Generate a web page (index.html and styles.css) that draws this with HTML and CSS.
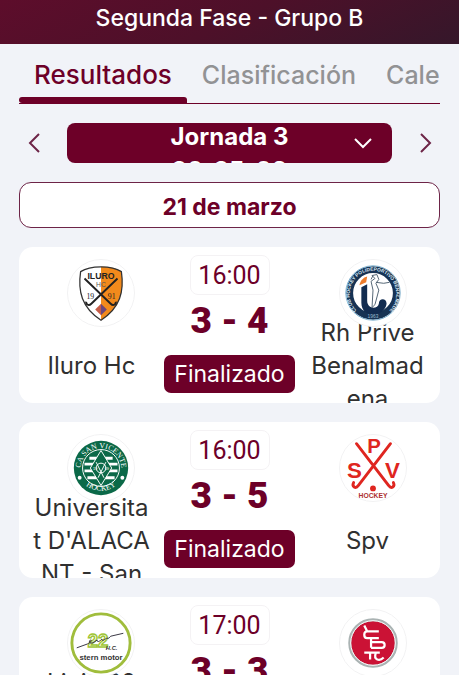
FILE: index.html
```html
<!DOCTYPE html>
<html lang="es">
<head>
    <meta charset="UTF-8">
    <meta name="viewport" content="width=device-width, initial-scale=1.0">
    <title>Resultados</title>
    <link rel="stylesheet" href="styles.css">
</head>
<body>
    <header class="cabecera">
        <h1>Segunda Fase - Grupo B</h1>
    </header>
    <main>
        <nav class="pestanas">
            <a class="pestana activa" href="#resultados">Resultados</a>
            <a class="pestana" href="#clasificacion">Clasificación</a>
            <a class="pestana" href="#calendario">Cale</a>
        </nav>

        <div class="jornadas">
            <button class="flecha" aria-label="Jornada anterior">
                <svg width="12" height="22" viewBox="0 0 12 22"><path d="M11 2L2 11l9 9"/></svg>
            </button>
            <button class="jornada">
                <span class="jornada-texto">Jornada 3<br>20-25-03</span>
                <svg width="18" height="12" viewBox="0 0 18 12"><path d="M1 2l8 8 8-8"/></svg>
            </button>
            <button class="flecha" aria-label="Jornada siguiente">
                <svg width="12" height="22" viewBox="0 0 12 22"><path d="M1 2l9 9-9 9"/></svg>
            </button>
        </div>

        <h2 class="fecha">21 de marzo</h2>

        <article class="partido">
            <div class="equipo local">
                <svg class="escudo" viewBox="0 0 68 68">
                    <path d="M34 7c8 0 15 1 21 5 3 20-1 37-21 50C14 49 10 32 13 12c6-4 13-5 21-5z" fill="#fff"/>
                    <path d="M34 7c8 0 15 1 21 5 3 20-1 37-21 50z" fill="#f28a1c"/>
                    <path d="M34 7c8 0 15 1 21 5 3 20-1 37-21 50C14 49 10 32 13 12c6-4 13-5 21-5z" fill="none" stroke="#333" stroke-width="1.3"/>
                    <path d="M34 45l6 6-6 6z" fill="#6c477c"/>
                    <path d="M34 45l-6 6 6 6z" fill="#c65c48"/>
                    <path d="M17 19l27 26c3 3 6 0 5-2M51 19L24 45c-3 3-6 0-5-2" fill="none" stroke="#222" stroke-width="2"/>
                    <text x="34" y="20" font-size="9" font-weight="700" fill="#222">ILURO</text>
                    <text x="34" y="28" font-size="7" fill="#555">HC</text>
                    <text class="serif" x="23" y="40" font-size="8" fill="#222">19</text>
                    <text class="serif" x="45" y="40" font-size="8" fill="#222">91</text>
                </svg>
                <div class="nombre">Iluro Hc</div>
            </div>
            <div class="marcador">
                <time class="hora">16:00</time>
                <strong class="goles">3 - 4</strong>
                <span class="estado">Finalizado</span>
            </div>
            <div class="equipo visitante">
                <svg class="escudo" viewBox="0 0 68 68">
                    <defs>
                        <path id="aroBenalmadena" d="M17 52A24 24 0 1 1 51 52"/>
                    </defs>
                    <circle cx="34" cy="34" r="24" fill="#fff" stroke="#173354" stroke-width="7"/>
                    <circle cx="34" cy="34" r="28" fill="none" stroke="#74a9c9" stroke-width="1"/>
                    <text class="aro" font-size="5" font-weight="700" fill="#dceaf4"><textPath href="#aroBenalmadena">CLUB HOCKEY POLIDEPORTIVO BENALMADENA</textPath></text>
                    <path d="M22 28l6-3v17c0 9 11 9 12 3 0-6 8-6 8 0-2 14-26 16-26-1z" fill="#122c50"/>
                    <path d="M20 26c1-5 4-8 8-9l-1 6z" fill="#ee7c2c"/>
                    <path d="M33 16l5-1 2 5-3 4 3 7-4 15-3 3 1-18-2-9 4-3zM37 23l8 1 6-1M34 16l-2 4" fill="#fff" stroke="#526373" stroke-width="1"/>
                    <text x="34" y="60" font-size="5" fill="#9cbad0">1963</text>
                </svg>
                <div class="nombre">Rh Prive Benalmadena</div>
            </div>
        </article>

        <article class="partido">
            <div class="equipo local">
                <svg class="escudo" viewBox="0 0 68 68">
                    <defs>
                        <path id="aroSuperior" d="M14 41A21 21 0 1 1 54 41"/>
                        <path id="aroInferior" d="M13 46A25 25 0 0 0 55 46"/>
                    </defs>
                    <circle cx="34" cy="34" r="28" fill="#0b6948"/>
                    <circle cx="34" cy="34" r="19" fill="#0b6948" stroke="#fff" stroke-width="1"/>
                    <path d="M22 24h24M17 30h34M17 37h34M20 44h28" stroke="#fff" stroke-width="3"/>
                    <path d="M34 16l11 18-11 18-11-18z" fill="#0b6948" stroke="#fff" stroke-width="1"/>
                    <path d="M29 28l8 16M39 28l-8 16" stroke="#fff" stroke-width="1"/>
                    <circle cx="34" cy="34" r="5" fill="none" stroke="#fff" stroke-width="1"/>
                    <text x="28" y="36" font-size="4" fill="#fff">19</text>
                    <text x="40" y="36" font-size="4" fill="#fff">69</text>
                    <circle cx="12" cy="44" r="2" fill="#fff"/>
                    <circle cx="56" cy="44" r="2" fill="#fff"/>
                    <text class="serif" font-size="8" fill="#fff"><textPath href="#aroSuperior" startOffset="50%">CA SAN VICENTE</textPath></text>
                    <text class="serif" font-size="8" fill="#fff"><textPath href="#aroInferior" startOffset="50%">HOCKEY</textPath></text>
                </svg>
                <div class="nombre">Universitat&nbsp;D'ALACANT - San</div>
            </div>
            <div class="marcador">
                <time class="hora">16:00</time>
                <strong class="goles">3 - 5</strong>
                <span class="estado">Finalizado</span>
            </div>
            <div class="equipo visitante">
                <svg class="escudo" viewBox="0 0 68 68">
                    <path d="M17 9l33 43c3 4 7 1 5-3M52 9L19 52c-3 4-7 1-5-3" fill="none" stroke="#df2620" stroke-width="3" stroke-linecap="round"/>
                    <circle cx="34" cy="55" r="3" fill="#df2620"/>
                    <text x="35" y="19" font-size="21" font-weight="700" fill="#df2620">P</text>
                    <text x="15" y="44" font-size="23" font-weight="700" fill="#df2620">S</text>
                    <text x="54" y="44" font-size="23" font-weight="700" fill="#df2620">V</text>
                    <text x="34" y="65" font-size="7" font-weight="700" fill="#ad3030">HOCKEY</text>
                </svg>
                <div class="nombre">Spv</div>
            </div>
        </article>

        <article class="partido">
            <div class="equipo local">
                <svg class="escudo" viewBox="0 0 68 68">
                    <circle cx="34" cy="34" r="30" fill="#fff" stroke="#a0bd3c" stroke-width="3"/>
                    <text x="31" y="38" font-size="19" font-weight="700" fill="#fff" stroke="#a0c536" stroke-width="1.5">22</text>
                    <path d="M9 39l11-4c4-2 5-5 3-4s-1 5 4 2l3-2c0 3 3 1 5-1 0 3 3 0 5-1 2 1 3-1 4-2l13-3" fill="none" stroke="#35333f" stroke-width="1"/>
                    <text x="45" y="41" font-size="6" font-style="italic" font-weight="700" fill="#333">H.C.</text>
                    <text x="34" y="51" font-size="8" font-weight="700" fill="#333">stern motor</text>
                </svg>
                <div class="nombre">Linia 22<br>Hockey<br>Club</div>
            </div>
            <div class="marcador">
                <time class="hora">17:00</time>
                <strong class="goles">3 - 3</strong>
                <span class="estado">Finalizado</span>
            </div>
            <div class="equipo visitante">
                <svg class="escudo" viewBox="0 0 68 68">
                    <circle cx="34" cy="34" r="24" fill="#cb1235" stroke="#aab3b3" stroke-width="3"/>
                    <circle cx="34" cy="34" r="23" fill="none" stroke="#fff" stroke-width="1"/>
                    <path d="M25 16l3 6M40 22H28c-4 0-4 7 0 7h12M32 29v10M32 33h11c4 0 4 6 0 6H32M25 44h16M31 44v7M37 44c-3 8 4 9 8 5" fill="none" stroke="#fff" stroke-width="2.3"/>
                </svg>
                <div class="nombre">Cpt</div>
            </div>
        </article>
    </main>
</body>
</html>
```

FILE: styles.css
```css
* {
    box-sizing: border-box;
}

body {
    margin: 0;
    height: 100vh;
    overflow: hidden;
    background-color: #f1f3f8;
    color: #303030;
    font-family: Inter, "Open Sans", sans-serif;
}

.cabecera {
    height: 44px;
    padding-top: 3px;
    background: linear-gradient(155deg, #5d0d2b 0%, #4d1029 50%, #35172a 100%);
}

h1 {
    margin: 0;
    color: #fff;
    font-size: 23px;
    font-weight: 500;
    line-height: 30px;
    text-align: center;
}

main {
    padding: 0 19px;
}

.pestanas {
    display: flex;
    height: 60px;
    overflow: hidden;
    border-bottom: 1px solid #6d0028;
}

.pestana {
    flex: none;
    padding: 14px 15px 0;
    color: #929294;
    font-size: 25px;
    font-weight: 500;
    line-height: 34px;
    text-decoration: none;
}

.activa {
    position: relative;
    color: #6d0028;
    font-size: 26px;
}

.activa::after {
    content: "";
    position: absolute;
    left: 0;
    right: 0;
    bottom: 0;
    height: 6px;
    border-radius: 4px 4px 0 4px;
    background-color: #6d0028;
}

.jornadas {
    display: flex;
    align-items: center;
    justify-content: space-between;
    gap: 19px;
    margin-top: 19px;
}

button {
    padding: 0;
    border: 0;
    background: none;
    font-family: inherit;
}

.flecha {
    display: flex;
    justify-content: center;
    width: 29px;
}

button svg {
    fill: none;
    stroke: #6d2447;
    stroke-width: 2;
}

.jornada {
    display: flex;
    flex: 1;
    align-items: flex-start;
    position: relative;
    height: 40px;
    overflow: hidden;
    border-radius: 8px;
    background-color: #6d0028;
    color: #fff;
    font-size: 24px;
    font-weight: 700;
    line-height: 34px;
}

.jornada-texto {
    flex: 1;
    margin-top: -3px;
}

.jornada svg {
    position: absolute;
    right: 20px;
    top: 14px;
    stroke: #fff;
}

.fecha {
    margin: 19px 0;
    padding: 10px 8px 6px;
    border: 1px solid #6d2447;
    border-radius: 12px;
    background-color: #fff;
    color: #6d0028;
    font-size: 23px;
    line-height: 28px;
    text-align: center;
}

.partido {
    display: grid;
    grid-template-columns: 1fr 131px 1fr;
    grid-template-rows: 100%;
    height: 156px;
    margin-bottom: 19px;
    overflow: hidden;
    border-radius: 14px;
    background-color: #fff;
}

.equipo {
    display: flex;
    flex-direction: column;
    align-items: center;
    padding-top: 12px;
}

.escudo {
    flex: none;
    z-index: 1;
    width: 68px;
    height: 68px;
    border: 1px solid #f2f2f3;
    border-radius: 50%;
    background-color: #fff;
}

.local .escudo {
    margin-left: 18px;
}

.visitante .escudo {
    margin-left: 10px;
}

.escudo text {
    font-family: "Liberation Sans", sans-serif;
    text-anchor: middle;
}

.escudo .aro {
    text-anchor: start;
}

.escudo .serif {
    font-family: "Liberation Serif", serif;
}

/* los nombres largos quedan centrados y se meten bajo el escudo */
.nombre {
    display: grid;
    flex: 1;
    align-content: center;
    min-height: 0;
    width: 120px;
    font-size: 24px;
    line-height: 33px;
    text-align: center;
    overflow-wrap: anywhere;
}

.marcador {
    display: flex;
    flex-direction: column;
    align-items: center;
    padding-top: 8px;
    color: #6d0028;
}

.hora {
    width: 80px;
    padding-top: 2px;
    border: 1px solid #f4f2f4;
    border-radius: 8px;
    font-family: Roboto, sans-serif;
    font-size: 25px;
    line-height: 36px;
    text-align: center;
}

.goles {
    font-family: Roboto, sans-serif;
    font-size: 37px;
    font-weight: 900;
    line-height: 52px;
}

.estado {
    width: 100%;
    margin-top: 8px;
    border-radius: 7px;
    background-color: #6d0028;
    color: #fff;
    font-size: 23px;
    line-height: 38px;
    text-align: center;
}
```
